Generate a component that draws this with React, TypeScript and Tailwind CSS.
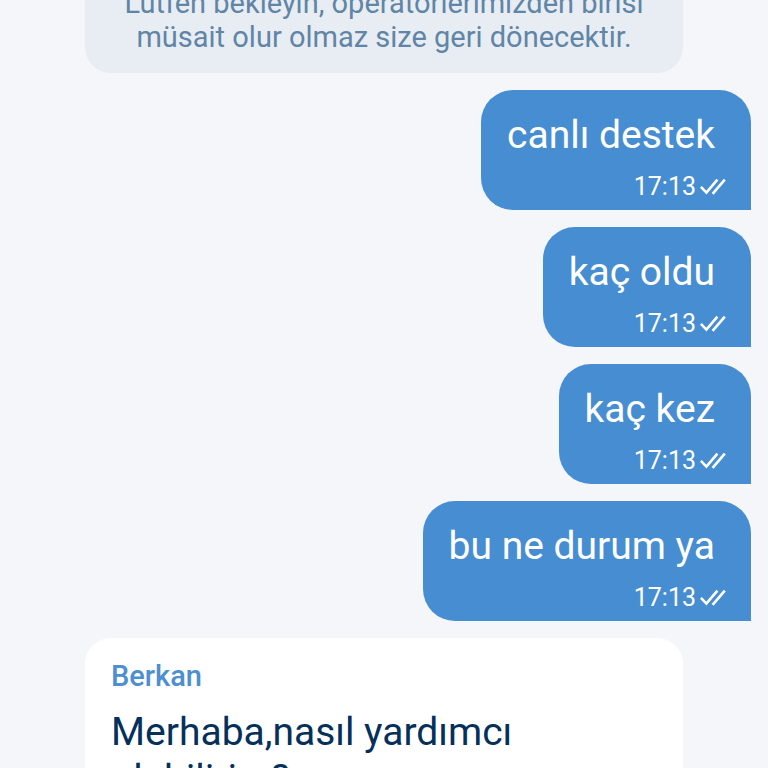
type Message = {
  id: number;
  text: string;
  time: string;
};

const messages: Message[] = [
  { id: 1, text: 'canlı destek', time: '17:13' },
  { id: 2, text: 'kaç oldu', time: '17:13' },
  { id: 3, text: 'kaç kez', time: '17:13' },
  { id: 4, text: 'bu ne durum ya', time: '17:13' },
];

function DoubleCheck() {
  return (
    <svg
      className="w-[26px] h-[18px]"
      viewBox="0 0 26 18"
      fill="none"
      stroke="currentColor"
      strokeWidth="2.6"
      aria-hidden="true"
    >
      <path d="M0.9 8.8 L6.4 14.6 L17.4 1.6" />
      <path d="M12.6 15.8 L24.8 1.6" />
    </svg>
  );
}

function SentMessage({ text, time }: Message) {
  return (
    <div className="self-end max-w-4/5 rounded-[32px] rounded-br-none bg-[#478dd1] text-white pt-[22px] pb-2 pl-[26px] pr-[25px]">
      <p className="text-[39px] leading-[47px] pr-[11px]">{text}</p>
      <div className="mt-[13px] flex items-center justify-end gap-1">
        <time className="text-[25px] leading-[30px]">{time}</time>
        <DoubleCheck />
      </div>
    </div>
  );
}

export default function App() {
  return (
    <main className="h-screen overflow-hidden bg-[#f4f6fa] font-[Roboto,sans-serif]">
      <div className="-mt-[14px] flex flex-col gap-[17px] px-[17px]">
        {/* System notice */}
        <div className="mx-[68px] rounded-b-[26px] bg-[#e8edf4] px-[26px] pb-[19px] text-center text-[29px] leading-[34px] text-[#6085a6]">
          Lütfen bekleyin, operatörlerimizden birisi müsait olur olmaz size geri dönecektir.
        </div>

        {messages.map((message) => (
          <SentMessage key={message.id} {...message} />
        ))}

        {/* Operator reply */}
        <div className="mx-[68px] rounded-[26px] bg-white px-[26px] pt-[21px] pb-[22px]">
          <h2 className="text-[29px] leading-[34px] font-medium text-[#4d8fd0]">Berkan</h2>
          <p className="mt-4 text-[39px] leading-[47px] text-[#05305a]">
            Merhaba,nasıl yardımcı olabilirim?
          </p>
        </div>
      </div>
    </main>
  );
}
